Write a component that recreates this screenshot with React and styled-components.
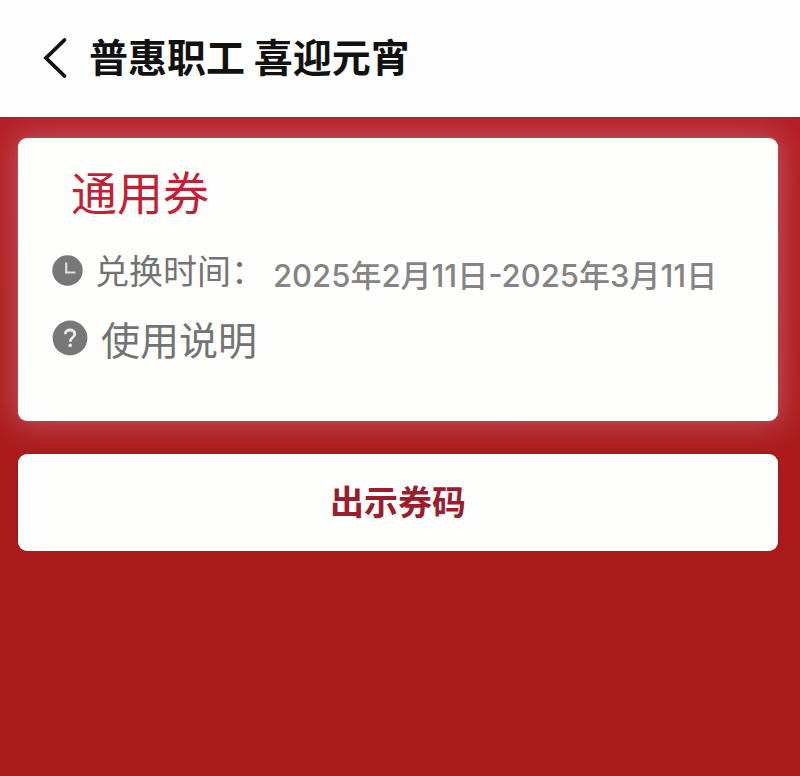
import React from "react";
import styled, { createGlobalStyle } from "styled-components";

const GlobalStyle = createGlobalStyle`
  *, *::before, *::after { box-sizing: border-box; }
  body {
    margin: 0;
    background: #ac1b1b;
    font-family: Inter, "Noto Sans CJK SC", sans-serif;
  }
  button { font: inherit; border: 0; cursor: pointer; }
`;

const Page = styled.div`
  min-height: 100vh;
  display: flex;
  flex-direction: column;
  background: linear-gradient(#b81f28, #ac1b1b 480px);
`;

const Header = styled.header`
  display: flex;
  align-items: center;
  gap: 19px;
  min-height: 117px;
  padding: 0 40px 4px;
  background: #fefefe;
`;

const BackButton = styled.button`
  display: flex;
  padding: 0;
  background: none;
  color: #111;
`;

const Title = styled.h1`
  margin: 0;
  padding-bottom: 4px;
  font-family: "Noto Sans CJK SC", sans-serif;
  font-size: 39px;
  line-height: 56px;
  font-weight: 700;
  color: #111;
`;

const Content = styled.main`
  display: flex;
  flex-direction: column;
  gap: 33px;
  padding: 21px 22px 24px 18px;
  overflow: hidden;
`;

const Card = styled.section`
  min-height: 283px;
  padding: 22px 34px;
  border-radius: 9px;
  background: #fefefd;
  box-shadow: 0 0 3px #b5525b, 0 0 30px 4px rgba(200, 110, 125, 0.65);
`;

const CouponName = styled.h2`
  margin: 0 0 20px 19px;
  font-family: "Noto Sans CJK SC", sans-serif;
  font-size: 46px;
  line-height: 60px;
  font-weight: 400;
  color: #c31f35;
`;

const Row = styled.div`
  display: flex;
  align-items: center;
  min-height: 60px;
  margin-bottom: 8px;
  color: #737373;
`;

const Label = styled.span`
  margin-left: ${(p) => p.$gap}px;
  font-family: "Noto Sans CJK SC", sans-serif;
  font-size: ${(p) => p.$size}px;
  line-height: 60px;
  white-space: nowrap;
`;

const Period = styled.span`
  margin-left: 8px;
  padding-top: 12px;
  font-size: 31px;
  line-height: 48px;
  font-weight: 500;
  white-space: nowrap;
  color: #848484;
`;

const HelpButton = styled.button`
  display: flex;
  align-items: center;
  padding: 0;
  background: none;
  color: #737373;
`;

const ShowCodeButton = styled.button`
  min-height: 97px;
  padding: 0 0 4px;
  border-radius: 9px;
  background: #fefefd;
  box-shadow: 0 0 3px #8d1b20;
  color: #9b1c2d;

  && {
    font-family: "Noto Sans CJK SC", sans-serif;
    font-size: 34px;
    line-height: 48px;
    font-weight: 700;
  }
`;

const BackIcon = () => (
  <svg width="30" height="44" viewBox="0 0 30 44" fill="none" aria-hidden="true">
    <path d="M24.500 5L6 23L24.500 41" stroke="currentColor" strokeWidth="3.800" strokeLinecap="round" />
  </svg>
);

const ClockIcon = () => (
  <svg width="31" height="31" viewBox="0 0 31 31" fill="none" aria-hidden="true">
    <circle cx="15.500" cy="15.500" r="15.200" fill="#777" />
    <path d="M14.200 7.500V17.500H23.500" stroke="#ddd" strokeWidth="2.200" />
  </svg>
);

const HelpIcon = () => (
  <svg width="36" height="36" viewBox="0 0 36 36" fill="none" aria-hidden="true">
    <circle cx="18" cy="18" r="17.400" fill="#777" />
    <path
      d="M13.200 14.200C13.200 8.500 22.800 8.800 22.800 13.900C22.800 17.500 18.200 17.500 18.200 21.700"
      stroke="#eee"
      strokeWidth="2.800"
    />
    <circle cx="18.200" cy="25.400" r="1.800" fill="#eee" />
  </svg>
);

export default function App() {
  return (
    <>
      <GlobalStyle />
      <Page>
        <Header>
          <BackButton aria-label="返回">
            <BackIcon />
          </BackButton>
          <Title>普惠职工 喜迎元宵</Title>
        </Header>
        <Content>
          <Card>
            <CouponName>通用券</CouponName>
            <Row>
              <ClockIcon />
              <Label $size={34} $gap={12}>兑换时间：</Label>
              <Period>2025年2月11日-2025年3月11日</Period>
            </Row>
            <Row>
              <HelpButton>
                <HelpIcon />
                <Label $size={39} $gap={13}>使用说明</Label>
              </HelpButton>
            </Row>
          </Card>
          <ShowCodeButton>出示券码</ShowCodeButton>
        </Content>
      </Page>
    </>
  );
}
